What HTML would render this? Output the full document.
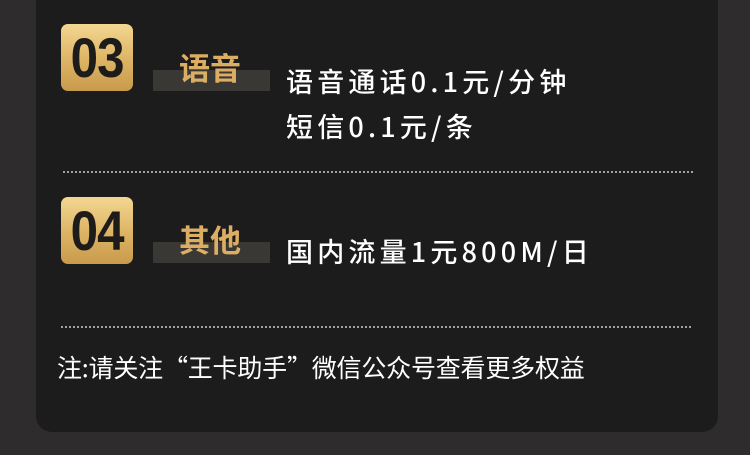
<!DOCTYPE html>
<html><head><meta charset="utf-8"><style>
*{margin:0;padding:0;box-sizing:border-box}
body{width:750px;height:455px;background:#2e2c2d;position:relative;overflow:hidden;font-family:"Liberation Sans","Noto Sans CJK SC",sans-serif}
.card{position:absolute;left:36px;top:-20px;width:682px;height:452px;background:#1c1c1c;border-radius:16px}
.badge{position:absolute;left:61px;width:72px;height:67px;border-radius:7px;background:linear-gradient(180deg,#f3d791 0%,#dcb364 55%,#c99a4c 100%);color:#1e1c1a;font-size:56px;line-height:67px;text-align:center;font-weight:bold}
.badge span{display:inline-block;transform:scaleX(0.88);letter-spacing:-1px}
.bar{position:absolute;left:153px;width:117px;height:21px;background:#3a3835}
.lab{position:absolute;left:179px;color:#dcae63;font-size:31px;font-weight:bold;line-height:34px;font-family:"Noto Sans CJK SC",sans-serif}
.t{position:absolute;left:286px;color:#fff;font-size:27px;line-height:32px;letter-spacing:4.2px;font-family:"Noto Sans CJK SC",sans-serif;font-weight:500;white-space:nowrap}
.dot{position:absolute;height:2px;background-image:radial-gradient(circle,#cfcfcf 0.8px,transparent 1px);background-size:4px 2px}
.note{position:absolute;left:57px;top:351px;color:#fff;font-size:25px;line-height:32px;font-family:"Noto Sans CJK SC",sans-serif;white-space:nowrap;letter-spacing:-0.2px}
</style></head><body>
<div class="card"></div>
<div class="badge" style="top:24px"><span>03</span></div>
<div class="bar" style="top:70px"></div>
<div class="lab" style="top:50px">语音</div>
<div class="t" style="top:65px">语音通话0.1元/分钟</div>
<div class="t" style="top:110px">短信0.1元/条</div>
<div class="dot" style="left:62px;top:171px;width:632px"></div>
<div class="badge" style="top:197px"><span>04</span></div>
<div class="bar" style="top:242px"></div>
<div class="lab" style="top:222px">其他</div>
<div class="t" style="top:235px">国内流量1元800M/日</div>
<div class="dot" style="left:60px;top:326px;width:632px"></div>
<div class="note">注:请关注“王卡助手”微信公众号查看更多权益</div>
</body></html>
